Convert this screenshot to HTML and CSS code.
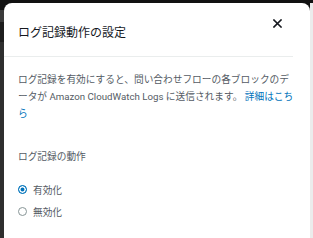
FILE: index.html
```html
<!DOCTYPE html>
<html lang="ja">
<head>
<meta charset="utf-8">
<link rel="stylesheet" href="styles.css">
</head>
<body>
<div class="screen">
  <div class="side-left"><div class="sl-top"></div><div class="sl-band"></div><div class="sl-dark"></div><div class="sl-rest"></div></div>
  <div class="modal">
    <div class="header">
      <h1 class="title">ログ記録動作の設定</h1>
      <button class="close" aria-label="閉じる">
        <svg width="9" height="9" viewBox="0 0 9 9"><path d="M1 1L8 8M8 1L1 8" stroke="#16191f" stroke-width="1.6" stroke-linecap="square"/></svg>
      </button>
    </div>
    <div class="body">
      <p class="desc">ログ記録を有効にすると、問い合わせフローの各ブロックのデータが Amazon CloudWatch Logs に送信されます。 <a class="link" href="#">詳細はこちら</a></p>
      <div class="label">ログ記録の動作</div>
      <div class="options">
        <label class="option"><span class="radio checked"></span><span class="opt-text">有効化</span></label>
        <label class="option"><span class="radio"></span><span class="opt-text">無効化</span></label>
      </div>
    </div>
  </div>
  <div class="side-right"></div>
</div>
</body>
</html>
```
FILE: styles.css
```css
* { box-sizing: border-box; }
html, body { margin: 0; padding: 0; }
body {
  width: 313px;
  height: 238px;
  overflow: hidden;
  background: #111;
  font-family: "Roboto", "Noto Sans CJK JP", sans-serif;
}
.screen {
  display: flex;
  height: 238px;
}
.side-left {
  width: 4px;
  display: flex;
  flex-direction: column;
}
.sl-top { height: 10px; background: #111; }
.sl-band { height: 12px; background: #3a3a3a; }
.sl-dark { height: 20px; background: #1d1d1d; }
.sl-rest { flex: 1; background: #2e2e2e; }
.modal {
  width: 306px;
  margin-top: 3px;
  background: #fff;
  border-radius: 8px 8px 0 0;
  display: flex;
  flex-direction: column;
}
.side-right {
  flex: 1;
  background: #ececec;
  margin-top: 3px;
}
.header {
  display: flex;
  align-items: flex-start;
  justify-content: space-between;
  margin-right: 17px;
  padding: 16px 11px 0 14px;
  height: 54px;
  border-bottom: 1px solid #eaeded;
}
.title {
  margin: 5px 0 0;
  font-size: 12px;
  line-height: 16px;
  font-weight: 400;
  color: #16191f;
  font-family: "Noto Sans CJK JP", sans-serif;
}
.close {
  border: 0;
  background: none;
  padding: 0;
  width: 9px;
  height: 9px;
  display: flex;
}
.body {
  padding: 14px 13px 0 14px;
}
.desc {
  margin: 0;
  font-size: 9.7px;
  line-height: 17px;
  color: #545b64;
  font-family: "Roboto", "Noto Sans CJK JP", sans-serif;
}
.link {
  color: #0073bb;
  text-decoration: none;
}
.label {
  margin-top: 26px;
  font-size: 9.7px;
  line-height: 17px;
  color: #545b64;
  font-family: "Noto Sans CJK JP", sans-serif;
}
.options {
  margin-top: 16px;
  display: flex;
  flex-direction: column;
  gap: 5px;
}
.option {
  display: flex;
  align-items: center;
  gap: 6px;
  height: 17px;
}
.radio {
  width: 9px;
  height: 9px;
  border-radius: 50%;
  border: 1px solid #879596;
  background: #fff;
  flex: none;
}
.radio.checked {
  border: 1px solid #0073bb;
  background: #0073bb;
  box-shadow: inset 0 0 0 1.5px #fff;
}
.opt-text {
  font-size: 9.7px;
  color: #545b64;
  font-family: "Noto Sans CJK JP", sans-serif;
}
```
